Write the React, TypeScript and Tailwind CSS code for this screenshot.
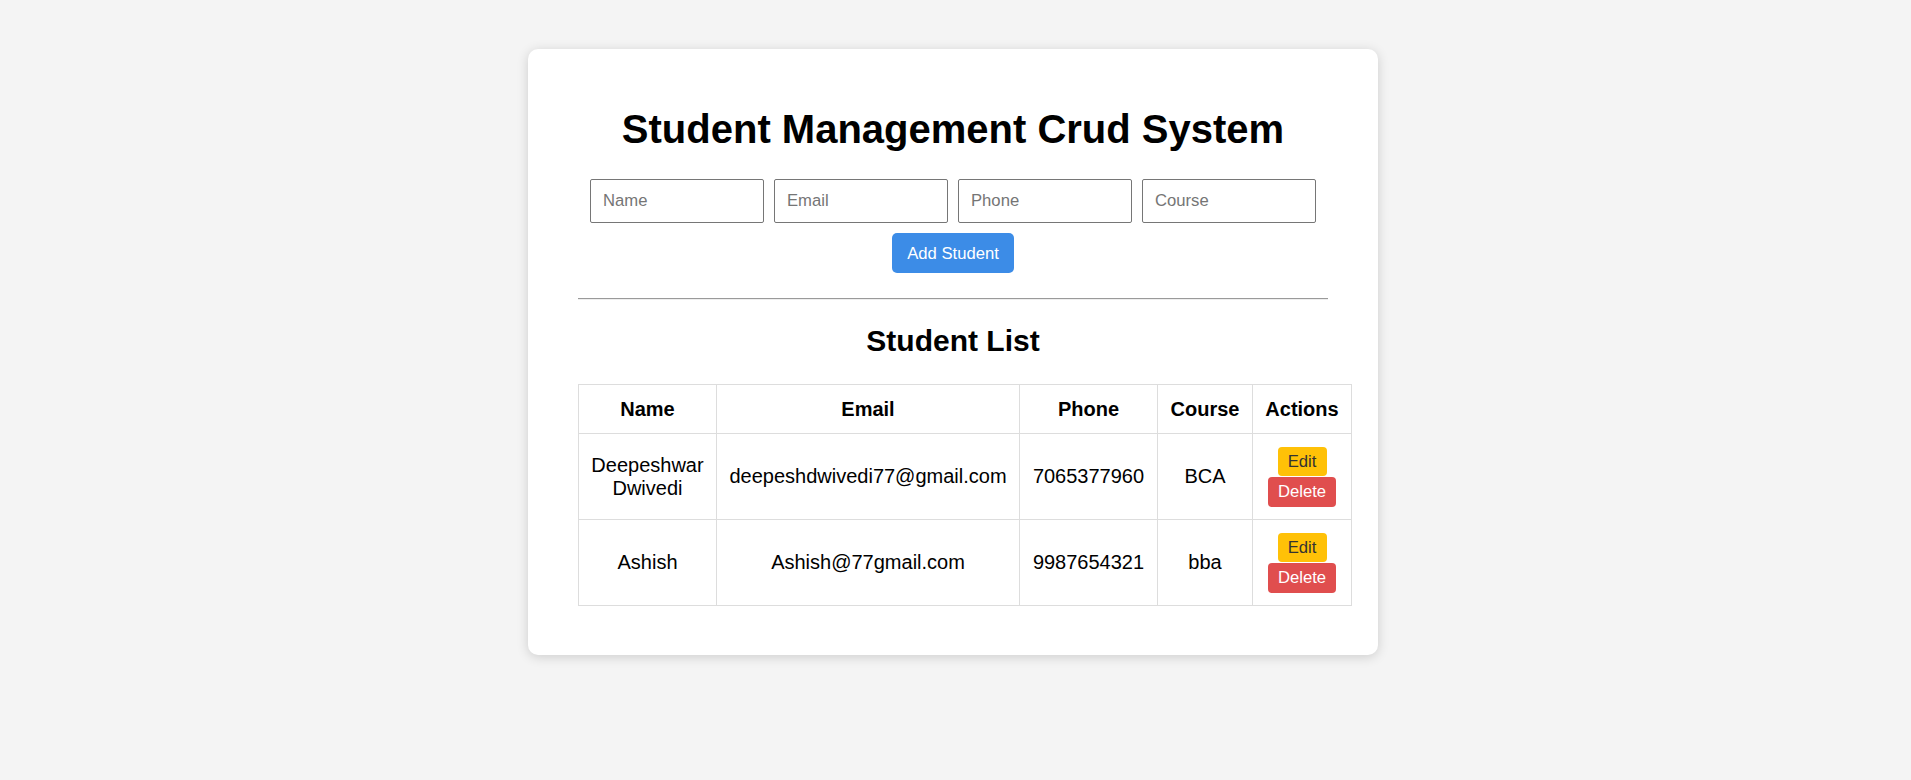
import React from "react";

const students = [
  { name: "Deepeshwar Dwivedi", email: "deepeshdwivedi77@gmail.com", phone: "7065377960", course: "BCA" },
  { name: "Ashish", email: "Ashish@77gmail.com", phone: "9987654321", course: "bba" },
];

export default function App() {
  return (
    <div
      className="min-h-[780px] w-full bg-[#f4f4f4] text-black"
      style={{ fontFamily: '"Liberation Sans", Arial, sans-serif' }}
    >
      <div className="flex justify-center pr-[5px] pt-[49px]">
        <div className="w-[850px] rounded-[10px] bg-white px-[50px] pt-[58px] pb-[49px] shadow-[0_2px_12px_rgba(0,0,0,0.16)]">
          <h1 className="text-center text-[40px] font-bold leading-[45px]">Student Management Crud System</h1>
          <div className="mt-[27px] flex flex-wrap justify-center gap-[10px]">
            {["Name", "Email", "Phone", "Course"].map((p) => (
              <input
                key={p}
                placeholder={p}
                className="h-[44px] w-[174px] rounded-[2px] border border-[#767676] px-[12px] text-[16.67px] placeholder:text-[#757575] outline-none"
              />
            ))}
          </div>
          <div className="mt-[10px] flex justify-center">
            <button className="h-[40px] w-[122px] rounded-[5px] bg-[#3c8ce7] text-[16.67px] text-white">Add Student</button>
          </div>
          <div className="mt-[25px] h-[2px] border-t border-b border-t-[#9a9a9a] border-b-[#eeeeee]" />
          <h2 className="mt-[24px] text-center text-[30px] font-bold leading-[34px]">Student List</h2>
          <table className="mt-[26px] w-[773px] table-fixed border-collapse text-[20px] leading-[23px]">
            <colgroup>
              <col className="w-[138px]" />
              <col className="w-[303px]" />
              <col className="w-[138px]" />
              <col className="w-[95px]" />
              <col className="w-[99px]" />
            </colgroup>
            <thead>
              <tr className="h-[49px]">
                {["Name", "Email", "Phone", "Course", "Actions"].map((h) => (
                  <th key={h} className="border border-[#dddddd] px-[6px] text-center font-bold whitespace-nowrap">
                    {h}
                  </th>
                ))}
              </tr>
            </thead>
            <tbody>
              {students.map((s) => (
                <tr key={s.email} className="h-[86px]">
                  <td className="border border-[#dddddd] px-[12px] text-center align-middle">{s.name}</td>
                  <td className="border border-[#dddddd] px-[8px] text-center align-middle whitespace-nowrap">{s.email}</td>
                  <td className="border border-[#dddddd] px-[8px] text-center align-middle whitespace-nowrap">{s.phone}</td>
                  <td className="border border-[#dddddd] px-[8px] text-center align-middle">{s.course}</td>
                  <td className="border border-[#dddddd] px-[4px] align-middle">
                    <div className="flex flex-col items-center gap-[1px]">
                      <button className="h-[29px] w-[49px] rounded-[4px] bg-[#ffc107] text-[16.67px] leading-[19px] text-[#333333]">Edit</button>
                      <button className="h-[30px] w-[68px] rounded-[4px] bg-[#e04e4e] text-[16.67px] leading-[19px] text-white">Delete</button>
                    </div>
                  </td>
                </tr>
              ))}
            </tbody>
          </table>
        </div>
      </div>
    </div>
  );
}
